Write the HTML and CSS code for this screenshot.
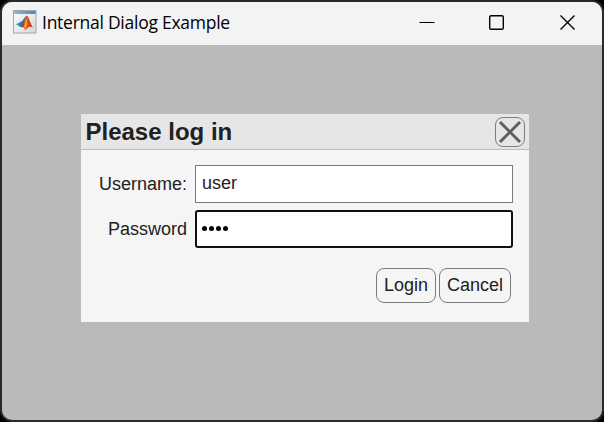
FILE: index.html
```html
<!DOCTYPE html>
<html lang="en">
<head>
<meta charset="utf-8">
<title>Internal Dialog Example</title>
<link rel="stylesheet" href="styles.css">
</head>
<body>
<div class="window">
  <header class="titlebar">
    <svg class="app-icon" viewBox="0 0 24 24">
      <defs>
        <linearGradient id="page" x1="0" y1="0" x2="1" y2="1"><stop offset="0" stop-color="#fdfdfd"/><stop offset="1" stop-color="#d3d7dd"/></linearGradient>
        <linearGradient id="bar" x1="0" y1="0" x2="1" y2="0"><stop offset="0" stop-color="#8db9de"/><stop offset="1" stop-color="#4a87bd"/></linearGradient>
        <linearGradient id="peak" x1="0" y1="0" x2="1" y2="0"><stop offset="0" stop-color="#7d1f14"/><stop offset=".35" stop-color="#e8641c"/><stop offset=".6" stop-color="#dd4a1b"/><stop offset="1" stop-color="#b3220f"/></linearGradient>
      </defs>
      <rect x=".5" y=".5" width="22.5" height="22.5" fill="url(#page)" stroke="#a1a7ae"/>
      <rect x="1" y="1" width="21.5" height="3" fill="url(#bar)"/>
      <path d="M3 14.3 7.5 12 10.5 14.5 8 17.2Z" fill="#3f86c1"/>
      <path d="M7.5 12C10 11.5 11.5 7 13.6 5.6L12 12 10.5 14.8 8 17.2 6.5 15.8Z" fill="#3a6f9f"/>
      <path d="M13.6 5.4C15.8 5.6 16.8 13 20.2 17.8 17.5 15.6 15.5 16.5 12.2 20.6 11.5 17.5 10.2 16.4 8 17.2 10.5 15 11.6 9.5 13.6 5.4Z" fill="url(#peak)"/>
      <path d="M13.4 8C14 11 14.4 15 12.6 19.5L11.2 16.4Z" fill="#f8a629"/>
    </svg>
    <h1 class="caption">Internal Dialog Example</h1>
    <svg class="control thin" viewBox="0 0 16 16"><path d="M.5 8.5h15"/></svg>
    <svg class="control" viewBox="0 0 16 16"><rect x="1.7" y="1.7" width="13.6" height="13.6" rx="1.4"/></svg>
    <svg class="control" viewBox="0 0 16 16"><path d="M1.5 1.5 15.5 15.5M15.5 1.5 1.5 15.5"/></svg>
  </header>
  <main class="content">
    <section class="dialog">
      <div class="dialog-head">
        <h2>Please log in</h2>
        <button class="close" type="button" aria-label="Close">
          <svg viewBox="0 0 28 28"><path d="M4 4 24 24M24 4 4 24"/></svg>
        </button>
      </div>
      <form class="fields">
        <label for="user">Username:</label>
        <input id="user" type="text" value="user">
        <label for="pass">Password</label>
        <div class="password" id="pass"><i></i><i></i><i></i><i></i></div>
      </form>
      <div class="actions">
        <button class="login" type="button">Login</button>
        <button class="cancel" type="button">Cancel</button>
      </div>
    </section>
  </main>
</div>
</body>
</html>
```
FILE: styles.css
```css
* { box-sizing: border-box; }

html { background: #000; }

body {
  margin: 0;
  height: 422px;
  overflow: hidden;
  font: 18px/22px "Liberation Sans", Arial, sans-serif;
  color: #212121;
}

.window {
  width: 604px;
  height: 422px;
  border: 2px solid #2b2929;
  border-radius: 12px;
  overflow: hidden;
  background: #bababa;
}

.titlebar {
  display: flex;
  align-items: flex-start;
  height: 43px;
  padding: 8px 27px 0 11px;
  background: #f3f3f3;
}

.app-icon { width: 24px; height: 24px; }

.caption {
  flex: 1;
  margin: 0 0 0 5px;
  font: 400 17.5px/24px "Open Sans", "Noto Sans", sans-serif;
  letter-spacing: -0.26px;
  white-space: nowrap;
  color: #000;
}

.control {
  width: 16px;
  height: 16px;
  margin: 4px 0 0 55px;
  fill: none;
  stroke: #000;
  stroke-width: 1.4;
}

.control.thin { margin-right: -2px; stroke-width: 1; }

.content { padding: 69px 0 0 79px; }

.dialog {
  width: 448px;
  height: 208px;
  background: #f5f5f5;
}

.dialog-head {
  display: flex;
  justify-content: space-between;
  height: 36px;
  padding: 3px 4px 0 4.5px;
  background: #e6e6e6;
  border-bottom: 1px solid #bdbdbd;
}

.dialog-head h2 {
  margin: 0;
  font-size: 24px;
  line-height: 30px;
}

button {
  padding: 0;
  border: 1px solid #7d7d7d;
  border-radius: 8px;
  background: #f5f5f5;
  color: inherit;
  font: inherit;
}

.close {
  width: 30px;
  height: 30px;
  background: #e6e6e6;
}

.close svg {
  display: block;
  width: 28px;
  height: 28px;
  fill: none;
  stroke: #5e5e5e;
  stroke-width: 3;
}

.fields {
  display: grid;
  grid-template-columns: 106px 318px;
  grid-auto-rows: 38px;
  gap: 7px 8px;
  padding-top: 15px;
}

label { align-self: center; text-align: right; }

input {
  padding: 0 6px 2px;
  border: 1px solid #7d7d7d;
  border-radius: 0;
  background: #fff;
  color: inherit;
  font: inherit;
}

.password {
  display: flex;
  align-items: center;
  gap: 2px;
  padding: 0 0 1px 5px;
  border: 2px solid #101010;
  border-radius: 3px;
  background: #fff;
}

.password i {
  width: 5px;
  height: 5px;
  border-radius: 50%;
  background: #000;
}

.actions {
  display: flex;
  justify-content: flex-end;
  gap: 3px;
  padding: 20px 18px 0 0;
}

.actions button { height: 35px; padding-bottom: 1px; }
.login { width: 60px; }
.cancel { width: 72px; }
```
